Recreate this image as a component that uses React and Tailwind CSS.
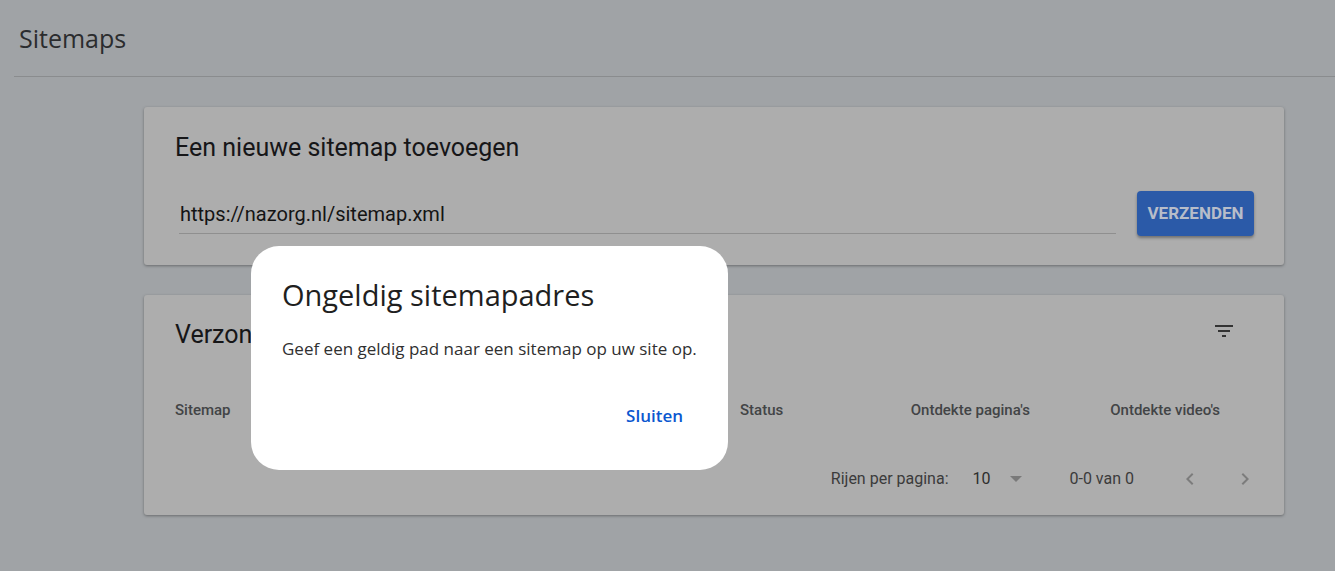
import React from 'react';

function FilterIcon() {
  return (
    <svg width="24" height="24" viewBox="0 0 24 24" fill="#333333">
      <path d="M10 18h4v-2h-4v2zM3 6v2h18V6H3zm3 7h12v-2H6v2z" />
    </svg>
  );
}

function Chevron({ dir }) {
  return (
    <svg width="24" height="24" viewBox="0 0 24 24" fill="#7c7c7c">
      {dir === 'left'
        ? <path d="M15.41 16.59 10.83 12l4.58-4.59L14 6l-6 6 6 6 1.41-1.41z" />
        : <path d="M8.59 16.59 13.17 12 8.59 7.41 10 6l6 6-6 6-1.41-1.41z" />}
    </svg>
  );
}

export default function App() {
  const roboto = { fontFamily: 'Roboto, "Liberation Sans", sans-serif' };
  const gsans = { fontFamily: '"Open Sans", Roboto, sans-serif' };

  return (
    <div className="relative w-[1335px] h-[571px] bg-[#a0a3a6] overflow-hidden" style={roboto}>
      <div className="pl-[19px] pt-[24px] h-[76px]">
        <h1 className="text-[25px] leading-[28px] text-[#2b2c2e]" style={gsans}>Sitemaps</h1>
      </div>
      <div className="ml-[14px] h-px bg-[#8a8c8e]" />

      <div className="pl-[144px] pr-[51px] pt-[30px] flex flex-col gap-[30px]">
        <section className="bg-[#adadad] rounded-[3px] shadow-[0_1px_3px_rgba(0,0,0,0.35)] h-[158px] px-[31px] pt-[27px]">
          <h2 className="text-[25px] leading-[28px] text-[#161618]">Een nieuwe sitemap toevoegen</h2>
          <div className="flex items-center mt-[29px]">
            <div className="flex-1 mr-[21px] ml-[4px] pt-[9px] border-b border-[#8f8f8f] pb-[5px]">
              <span className="text-[20px] leading-[22px] text-[#141414] pl-[1px]">https://nazorg.nl/sitemap.xml</span>
            </div>
            <button className="w-[117px] h-[45px] rounded-[4px] bg-[#2b5aa8] text-[#b7bdc9] font-bold text-[17px] shadow-[0_2px_3px_rgba(0,0,0,0.35)] mr-[-1px]">
              VERZENDEN
            </button>
          </div>
        </section>

        <section className="bg-[#adadad] rounded-[3px] shadow-[0_1px_3px_rgba(0,0,0,0.35)] h-[220px] pl-[31px] pr-[64px] pt-[26px]">
          <div className="flex items-start justify-between">
            <h2 className="text-[25px] leading-[28px] text-[#161618]">Verzonden sitemaps</h2>
            <div className="mt-[-2px] mr-[-16px]"><FilterIcon /></div>
          </div>
          <div className="flex items-center mt-[51px] text-[15px] leading-[20px] font-medium text-[#424446]">
            <div className="flex-1">Sitemap</div>
            <div className="w-[150px]">Status</div>
            <div className="w-[140px] text-right">Ontdekte pagina's</div>
            <div className="w-[190px] text-right">Ontdekte video's</div>
          </div>
          <div className="flex items-center justify-end h-[24px] mt-[47px] mr-[-37px] text-[16px] text-[#3b3b3b]">
            <span>Rijen per pagina:</span>
            <span className="ml-[24px] text-[#2d2d2d]">10</span>
            <span className="ml-[20px] w-0 h-0 border-l-[6px] border-r-[6px] border-t-[6px] border-l-transparent border-r-transparent border-t-[#7a7a7a]" />
            <span className="ml-[47px]">0-0 van 0</span>
            <div className="ml-[44px] flex items-center gap-[31px]">
              <Chevron dir="left" />
              <Chevron dir="right" />
            </div>
          </div>
        </section>
      </div>

      <div className="absolute left-[251px] top-[246px] w-[477px] h-[224px] bg-white rounded-[28px] px-[31px] pt-[31px]" style={gsans}>
        <h3 className="text-[29px] leading-[36px] text-[#1f1f1f]">Ongeldig sitemapadres</h3>
        <p className="mt-[24px] text-[17px] leading-[24px] text-[#303030]">Geef een geldig pad naar een sitemap op uw site op.</p>
        <div className="flex justify-end mt-[43px] mr-[14px]">
          <button className="text-[17px] leading-[24px] font-semibold text-[#0b57d0]">Sluiten</button>
        </div>
      </div>
    </div>
  );
}
